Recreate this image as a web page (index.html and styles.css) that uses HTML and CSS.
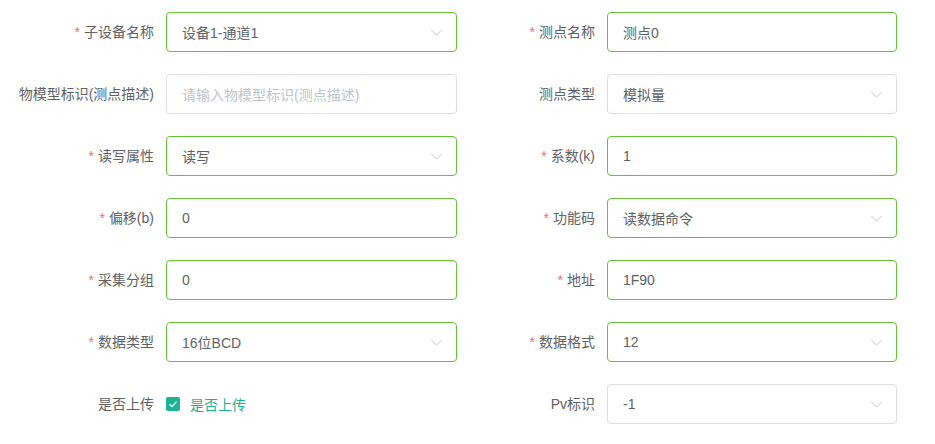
FILE: index.html
```html
<!DOCTYPE html>
<html lang="zh">
<head>
<meta charset="utf-8">
<link rel="stylesheet" href="styles.css">
</head>
<body>
<form class="form">
  <div class="col col-left">
    <div class="item"><label class="label req">子设备名称</label><div class="ctrl ok sel"><span class="val">设备1-通道1</span><svg class="arrow" viewBox="0 0 14 8"><path d="M1 1 L7 7 L13 1" /></svg></div></div>
    <div class="item"><label class="label">物模型标识(测点描述)</label><div class="ctrl"><span class="ph">请输入物模型标识(测点描述)</span></div></div>
    <div class="item"><label class="label req">读写属性</label><div class="ctrl ok sel"><span class="val">读写</span><svg class="arrow" viewBox="0 0 14 8"><path d="M1 1 L7 7 L13 1" /></svg></div></div>
    <div class="item"><label class="label req">偏移(b)</label><div class="ctrl ok"><span class="val">0</span></div></div>
    <div class="item"><label class="label req">采集分组</label><div class="ctrl ok"><span class="val">0</span></div></div>
    <div class="item"><label class="label req">数据类型</label><div class="ctrl ok sel"><span class="val">16位BCD</span><svg class="arrow" viewBox="0 0 14 8"><path d="M1 1 L7 7 L13 1" /></svg></div></div>
    <div class="item"><label class="label">是否上传</label><div class="check"><span class="box"><svg viewBox="0 0 14 14"><path d="M3.5 7.2 L6 9.6 L10.5 4.6" /></svg></span><span class="check-text">是否上传</span></div></div>
  </div>
  <div class="col col-right">
    <div class="item"><label class="label req">测点名称</label><div class="ctrl ok"><span class="val">测点0</span></div></div>
    <div class="item"><label class="label">测点类型</label><div class="ctrl sel"><span class="val">模拟量</span><svg class="arrow" viewBox="0 0 14 8"><path d="M1 1 L7 7 L13 1" /></svg></div></div>
    <div class="item"><label class="label req">系数(k)</label><div class="ctrl ok"><span class="val">1</span></div></div>
    <div class="item"><label class="label req">功能码</label><div class="ctrl ok sel"><span class="val">读数据命令</span><svg class="arrow" viewBox="0 0 14 8"><path d="M1 1 L7 7 L13 1" /></svg></div></div>
    <div class="item"><label class="label req">地址</label><div class="ctrl ok"><span class="val">1F90</span></div></div>
    <div class="item"><label class="label req">数据格式</label><div class="ctrl ok sel"><span class="val">12</span><svg class="arrow" viewBox="0 0 14 8"><path d="M1 1 L7 7 L13 1" /></svg></div></div>
    <div class="item"><label class="label">Pv标识</label><div class="ctrl sel"><span class="val">-1</span><svg class="arrow" viewBox="0 0 14 8"><path d="M1 1 L7 7 L13 1" /></svg></div></div>
  </div>
</form>
</body>
</html>
```
FILE: styles.css
```css
html, body {
  margin: 0;
  padding: 0;
  background: #fff;
  font-family: "Helvetica Neue", "Liberation Sans", "Noto Sans CJK SC", sans-serif;
  font-size: 14px;
  color: #606266;
}
.form {
  display: grid;
  grid-template-columns: 457px 440px;
  padding-top: 12px;
}
.col {
  display: flex;
  flex-direction: column;
  gap: 22px;
}
.item {
  display: flex;
  align-items: center;
  height: 40px;
}
.col-left .label { width: 154px; }
.col-right .label { width: 138px; }
.label {
  flex: none;
  text-align: right;
  margin-right: 12px;
  line-height: 40px;
  white-space: nowrap;
  color: #606266;
}
.label.req::before {
  content: "*";
  color: #f56c6c;
  margin-right: 4px;
}
.ctrl {
  box-sizing: border-box;
  width: 291px;
  height: 40px;
  border: 1px solid #dcdfe6;
  border-radius: 4px;
  display: flex;
  align-items: center;
  padding: 0 15px;
  justify-content: space-between;
}
.ctrl.ok { border-color: #67c23a; }
.val { color: #606266; }
.ph { color: #c0c4cc; }
.arrow {
  width: 13px;
  height: 7px;
  margin-right: -2px;
  fill: none;
  stroke: #c0c4cc;
  stroke-width: 1.1;
}
.check {
  display: flex;
  align-items: center;
  height: 40px;
}
.box {
  width: 14px;
  height: 14px;
  border-radius: 2px;
  background: #1ab394;
  display: flex;
}
.box svg {
  width: 14px;
  height: 14px;
  fill: none;
  stroke: #fff;
  stroke-width: 1.3;
}
.check-text {
  margin-left: 10px;
  color: #1ab394;
}
```
